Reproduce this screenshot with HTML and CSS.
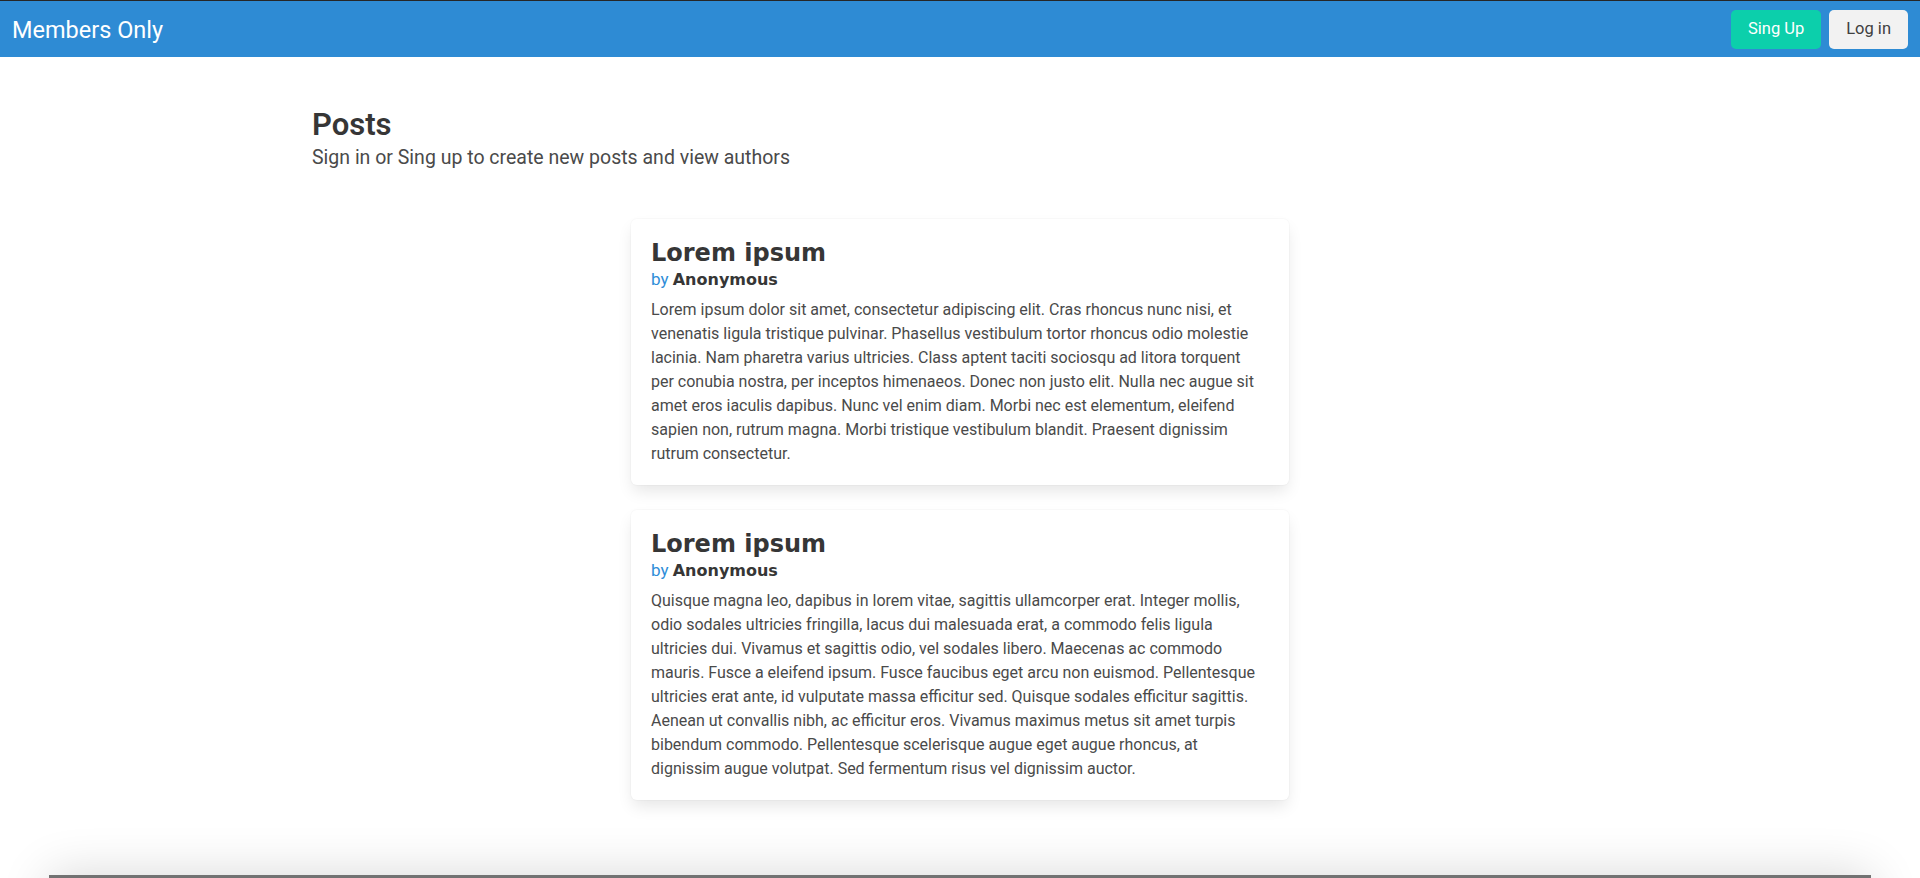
FILE: index.html
```html
<!DOCTYPE html>
<html lang="en">
<head>
<meta charset="utf-8">
<title>Members Only</title>
<link rel="stylesheet" href="styles.css">
</head>
<body>
<nav class="navbar">
  <a class="brand" href="#">Members Only</a>
  <div class="nav-buttons">
    <a class="btn btn-primary" href="#">Sing Up</a>
    <a class="btn btn-light" href="#">Log in</a>
  </div>
</nav>

<main class="main">
  <header class="container page-head">
    <h1 class="title">Posts</h1>
    <p class="subtitle">Sign in or Sing up to create new posts and view authors</p>
  </header>

  <section class="posts">
    <article class="card">
      <h2 class="card-title">Lorem ipsum</h2>
      <p class="byline"><span class="by">by</span> <strong class="author">Anonymous</strong></p>
      <p class="card-body">Lorem ipsum dolor sit amet, consectetur adipiscing elit. Cras rhoncus nunc nisi, et venenatis ligula tristique pulvinar. Phasellus vestibulum tortor rhoncus odio molestie lacinia. Nam pharetra varius ultricies. Class aptent taciti sociosqu ad litora torquent per conubia nostra, per inceptos himenaeos. Donec non justo elit. Nulla nec augue sit amet eros iaculis dapibus. Nunc vel enim diam. Morbi nec est elementum, eleifend sapien non, rutrum magna. Morbi tristique vestibulum blandit. Praesent dignissim rutrum consectetur.</p>
    </article>
    <article class="card">
      <h2 class="card-title">Lorem ipsum</h2>
      <p class="byline"><span class="by">by</span> <strong class="author">Anonymous</strong></p>
      <p class="card-body">Quisque magna leo, dapibus in lorem vitae, sagittis ullamcorper erat. Integer mollis, odio sodales ultricies fringilla, lacus dui malesuada erat, a commodo felis ligula ultricies dui. Vivamus et sagittis odio, vel sodales libero. Maecenas ac commodo mauris. Fusce a eleifend ipsum. Fusce faucibus eget arcu non euismod. Pellentesque ultricies erat ante, id vulputate massa efficitur sed. Quisque sodales efficitur sagittis. Aenean ut convallis nibh, ac efficitur eros. Vivamus maximus metus sit amet turpis bibendum commodo. Pellentesque scelerisque augue eget augue rhoncus, at dignissim augue volutpat. Sed fermentum risus vel dignissim auctor.</p>
    </article>
  </section>
</main>

<footer class="footer"></footer>
</body>
</html>
```

FILE: styles.css
```css
* {
  box-sizing: border-box;
}

html, body {
  margin: 0;
  padding: 0;
}

body {
  font-family: Roboto, "Liberation Sans", sans-serif;
  color: #4a4a4a;
  background: #ffffff;
  font-size: 16px;
  line-height: 1.5;
}

.navbar {
  height: 57px;
  border-top: 1px solid #262626;
  background: #2e8bd4;
  display: flex;
  align-items: center;
  justify-content: space-between;
  padding: 0 12px;
}

.brand {
  color: #ffffff;
  text-decoration: none;
  font-size: 23.5px;
  line-height: 1;
  padding-top: 3px;
}

.nav-buttons {
  display: flex;
  gap: 8px;
}

.btn {
  display: inline-flex;
  align-items: center;
  justify-content: center;
  height: 39px;
  padding: 1px 17px 0;
  border-radius: 5px;
  font-size: 16.5px;
  text-decoration: none;
}

.btn-primary {
  background: #0ccfab;
  color: #ffffff;
}

.btn-light {
  background: #f2f2f2;
  color: #404040;
}

.main {
  padding-top: 50px;
}

.container {
  max-width: 1296px;
  margin: 0 auto;
}

.title {
  margin: 0;
  font-size: 31px;
  font-weight: 600;
  line-height: 36px;
  color: #363636;
}

.subtitle {
  margin: 2px 0 0;
  font-size: 19.5px;
  line-height: 25px;
  color: #4a4a4a;
}

.posts {
  display: flex;
  flex-direction: column;
  align-items: center;
  gap: 25px;
  margin-top: 49px;
}

.card {
  width: 658px;
  padding: 21px 23px 19px 20px;
  background: #ffffff;
  border-radius: 6px;
  box-shadow: 0 8px 16px -2px rgba(10, 10, 10, 0.1), 0 0 0 1px rgba(10, 10, 10, 0.02);
}

.card-title {
  margin: 0;
  font-family: "DejaVu Sans", Verdana, sans-serif;
  font-weight: 700;
  font-size: 24px;
  line-height: 27px;
  color: #363636;
}

.byline {
  margin: 0;
  font-size: 17px;
  line-height: 24px;
}

.by {
  color: #2f8dd8;
}

.author {
  font-family: "DejaVu Sans", Verdana, sans-serif;
  font-weight: 700;
  font-size: 16px;
  color: #363636;
}

.card-body {
  margin: 6px 0 0;
  font-size: 16px;
  line-height: 24px;
  color: #4a4a4a;
}

.footer {
  margin: 75px 49px 0;
  height: 120px;
  background: #727272;
  box-shadow: 0 0 50px rgba(0, 0, 0, 0.16);
}
```
